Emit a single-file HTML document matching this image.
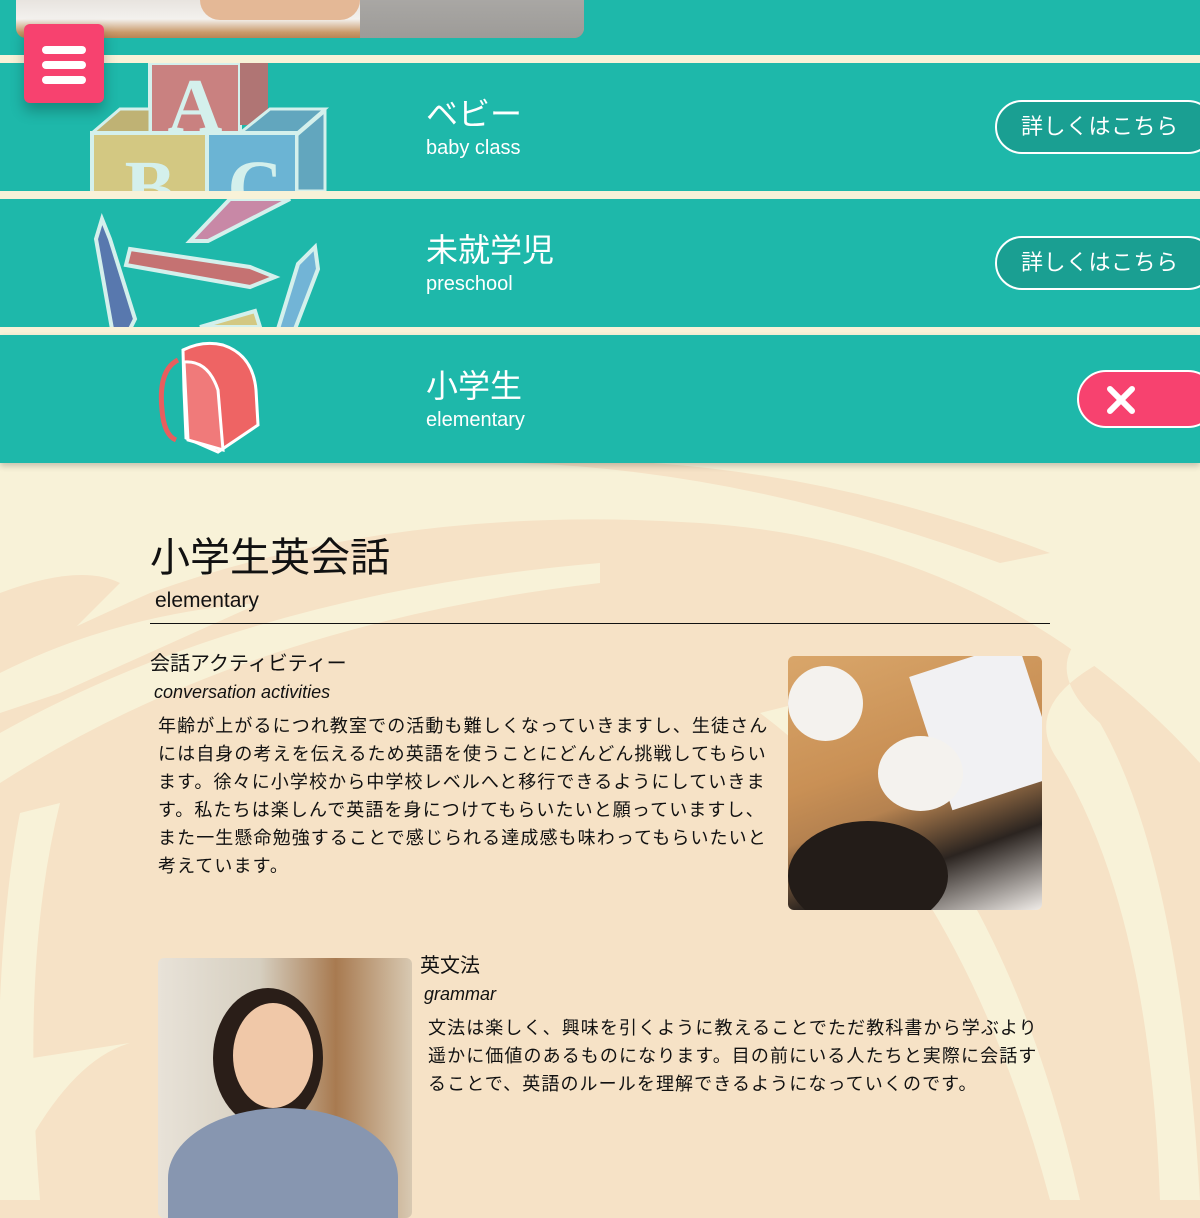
<!DOCTYPE html>
<html><head><meta charset="utf-8"><style>
*{margin:0;padding:0;box-sizing:border-box}
body{width:1200px;height:1200px;overflow:hidden;background:#f6e2c6;font-family:"Liberation Sans","Noto Sans CJK JP",sans-serif;position:relative}
.abs{position:absolute}
.band{position:absolute;left:0;width:1200px;height:128px;background:#1eb8aa}
.stripe{position:absolute;left:0;width:1200px;height:8px;background:#f8f2d8}
.t{position:absolute;left:426px;color:#fff}
.t .j{font-size:32px;line-height:36px}
.t .e{font-size:20px;line-height:24px;margin-top:4px}
.btn{position:absolute;left:995px;width:220px;height:54px;border:2px solid #fff;border-radius:27px;background:#1a9f92;color:#fff;font-size:22px;line-height:50px;padding-left:24px;letter-spacing:0.5px}
.tx{color:#111;font-size:18px;line-height:28px;letter-spacing:1.1px}
</style></head><body>
<svg class="abs" style="left:0;top:463px" width="1200" height="737">
<rect width="1200" height="737" fill="#f6e2c6"/>
<path d="M0 0 L1200 0 L1200 300 Q1000 80 700 60 Q400 40 150 130 Q60 170 0 200Z" fill="#f8f2d8"/>
<path d="M430 0 Q700 -10 1000 100 L1050 90 Q760 -20 480 0Z" fill="#f6e2c6"/>
<path d="M0 130 Q80 100 120 120 L40 200 L0 210Z" fill="#f6e2c6"/>
<path d="M0 320 Q250 160 600 120 L600 100 Q250 130 0 270Z" fill="#f8f2d8"/>
<path d="M0 210 Q120 150 260 140 L60 230 L0 250Z" fill="#f8f2d8"/>
<path d="M1200 120 Q1000 170 1100 260 Q1180 400 1200 737 L1160 737 Q1150 450 1060 300 Q1000 220 1200 160Z" fill="#f8f2d8"/>
<path d="M0 800 Q-10 500 20 350 L60 340 Q20 500 40 737Z" fill="#f8f2d8"/>
<path d="M130 580 Q60 600 0 737 L0 600Z" fill="#f8f2d8"/>
<path d="M760 250 Q960 400 1050 737 L1080 737 Q1000 380 800 240Z" fill="#f8f2d8"/>
</svg>
<div class="abs" style="left:0;top:0;width:1200px;height:55px;background:#1eb8aa"></div>
<div class="abs" style="left:16px;top:0;width:568px;height:38px;border-radius:0 0 10px 10px;background:linear-gradient(180deg,#e8e4df 0%,#f3f1ee 50%,#c99a6a 85%,#b88454 100%)"></div>
<div class="abs" style="left:360px;top:0;width:224px;height:38px;border-radius:0 0 10px 0;background:linear-gradient(180deg,#a9a7a4,#9d9b98)"></div>
<div class="abs" style="left:200px;top:0;width:160px;height:20px;border-radius:0 0 20px 20px;background:#e4b896"></div>
<div class="stripe" style="top:55px"></div>
<div class="band" style="top:63px"></div>
<div class="stripe" style="top:191px"></div>
<div class="band" style="top:199px"></div>
<div class="stripe" style="top:327px"></div>
<div class="band" style="top:335px;box-shadow:0 3px 6px rgba(0,0,0,.2)"></div>
<svg class="abs" style="left:90px;top:63px" width="240" height="128">
<rect x="60" y="0" width="90" height="75" fill="#c98180" stroke="#d4f0ec" stroke-width="4"/>
<rect x="150" y="0" width="28" height="62" fill="#b07574"/>
<text x="105" y="68" font-family="Liberation Serif" font-size="76" font-weight="bold" fill="#d4f0ec" text-anchor="middle">A</text>
<path d="M2 70 L30 46 L60 46 L60 70Z" fill="#bfb274" stroke="#d4f0ec" stroke-width="3"/>
<path d="M150 70 L180 46 L235 46 L205 72Z" fill="#62a6be" stroke="#d4f0ec" stroke-width="3"/>
<rect x="2" y="70" width="115" height="60" fill="#d3c882" stroke="#d4f0ec" stroke-width="4"/>
<rect x="117" y="70" width="90" height="60" fill="#6bb4d4" stroke="#d4f0ec" stroke-width="4"/>
<path d="M207 72 L235 48 L235 128 L207 128Z" fill="#62a6be" stroke="#d4f0ec" stroke-width="3"/>
<text x="60" y="150" font-family="Liberation Serif" font-size="76" font-weight="bold" fill="#d4f0ec" text-anchor="middle">B</text>
<text x="165" y="150" font-family="Liberation Serif" font-size="76" font-weight="bold" fill="#d4f0ec" text-anchor="middle">C</text>
</svg>
<svg class="abs" style="left:90px;top:199px" width="240" height="128" fill="none" stroke="#d4f0ec" stroke-width="4">
<path d="M140 0 L200 0 L118 42 L100 42Z" fill="#c888a6"/>
<path d="M12 20 L20 40 L45 120 L40 130 L22 130 L6 40Z" fill="#5878ae"/>
<path d="M40 50 L160 68 L185 78 L160 88 L36 66Z" fill="#c57272"/>
<path d="M225 48 L228 70 L205 130 L188 130 L208 65Z" fill="#72b4d6"/>
<path d="M110 128 L165 112 L170 128Z" fill="#d3c882"/>
</svg>
<svg class="abs" style="left:158px;top:340px" width="105" height="118" stroke="#fff" stroke-width="3">
<path d="M20 20 Q0 30 4 70 Q6 95 18 100" fill="none" stroke="#e85e5e" stroke-width="5"/>
<path d="M25 10 Q45 0 65 5 Q95 15 98 50 L100 85 L60 112 L28 98 L26 50Z" fill="#ee6464"/>
<path d="M26 22 Q50 20 60 50 L65 110 L30 100Z" fill="#f07a7a"/>
</svg>
<div class="abs" style="left:24px;top:24px;width:80px;height:79px;background:#f7426f;border-radius:6px;box-shadow:0 8px 14px rgba(0,0,0,.25)">
<div class="abs" style="left:18px;top:22px;width:44px;height:8px;border-radius:4px;background:#fff"></div>
<div class="abs" style="left:18px;top:37px;width:44px;height:8px;border-radius:4px;background:#fff"></div>
<div class="abs" style="left:18px;top:52px;width:44px;height:8px;border-radius:4px;background:#fff"></div>
</div>
<div class="t" style="top:96px"><div class="j">ベビー</div><div class="e">baby class</div></div>
<div class="t" style="top:232px"><div class="j">未就学児</div><div class="e">preschool</div></div>
<div class="t" style="top:368px"><div class="j">小学生</div><div class="e">elementary</div></div>
<div class="btn" style="top:100px">詳しくはこちら</div>
<div class="btn" style="top:236px">詳しくはこちら</div>
<div class="abs" style="left:1077px;top:370px;width:140px;height:58px;border:2px solid #fff;border-radius:29px;background:#f7426f">
<svg class="abs" style="left:27px;top:13px" width="30" height="30"><path d="M4 4 L26 26 M26 4 L4 26" stroke="#fff" stroke-width="6" stroke-linecap="round"/></svg>
</div>
<div class="abs" style="left:150px;top:533px;font-size:40px;line-height:50px;color:#111">小学生英会話</div>
<div class="abs" style="left:155px;top:588px;font-size:21px;line-height:26px;color:#111">elementary</div>
<div class="abs" style="left:150px;top:623px;width:900px;height:1px;background:#111"></div>
<div class="abs" style="left:150px;top:651px;font-size:20px;line-height:26px;color:#111">会話アクティビティー</div>
<div class="abs" style="left:154px;top:680px;font-size:18px;line-height:24px;color:#111;font-style:italic">conversation activities</div>
<div class="abs tx" style="left:158px;top:712px;width:622px">年齢が上がるにつれ教室での活動も難しくなっていきますし、生徒さんには自身の考えを伝えるため英語を使うことにどんどん挑戦してもらいます。徐々に小学校から中学校レベルへと移行できるようにしていきます。私たちは楽しんで英語を身につけてもらいたいと願っていますし、また一生懸命勉強することで感じられる達成感も味わってもらいたいと考えています。</div>
<div class="abs" style="left:788px;top:656px;width:254px;height:254px;border-radius:6px;overflow:hidden;background:linear-gradient(160deg,#d9a66a 0%,#c99055 40%,#b58250 55%,#2b2420 75%,#f0ece8 100%)">
<div class="abs" style="left:0;top:10px;width:75px;height:75px;border-radius:50%;background:#f4f2ee"></div>
<div class="abs" style="left:140px;top:0;width:114px;height:140px;background:#f1f1f3;transform:rotate(-18deg)"></div>
<div class="abs" style="left:90px;top:80px;width:85px;height:75px;border-radius:50%;background:#f4f2ee"></div>
<div class="abs" style="left:0;top:165px;width:160px;height:110px;border-radius:50%;background:#231c18"></div>
</div>
<div class="abs" style="left:158px;top:958px;width:254px;height:260px;border-radius:6px;overflow:hidden;background:linear-gradient(90deg,#e8e2d8 0%,#d6cfc0 40%,#a87a50 70%,#d8c9b2 100%)">
<div class="abs" style="left:55px;top:30px;width:110px;height:140px;border-radius:50%;background:#2a1e18"></div>
<div class="abs" style="left:75px;top:45px;width:80px;height:105px;border-radius:50%;background:#f0c8a8"></div>
<div class="abs" style="left:10px;top:150px;width:230px;height:140px;border-radius:50% 50% 0 0;background:#8796b0"></div>
</div>
<div class="abs" style="left:420px;top:953px;font-size:20px;line-height:26px;color:#111">英文法</div>
<div class="abs" style="left:424px;top:982px;font-size:18px;line-height:24px;color:#111;font-style:italic">grammar</div>
<div class="abs tx" style="left:428px;top:1014px;width:622px">文法は楽しく、興味を引くように教えることでただ教科書から学ぶより遥かに価値のあるものになります。目の前にいる人たちと実際に会話することで、英語のルールを理解できるようになっていくのです。</div>
</body></html>
